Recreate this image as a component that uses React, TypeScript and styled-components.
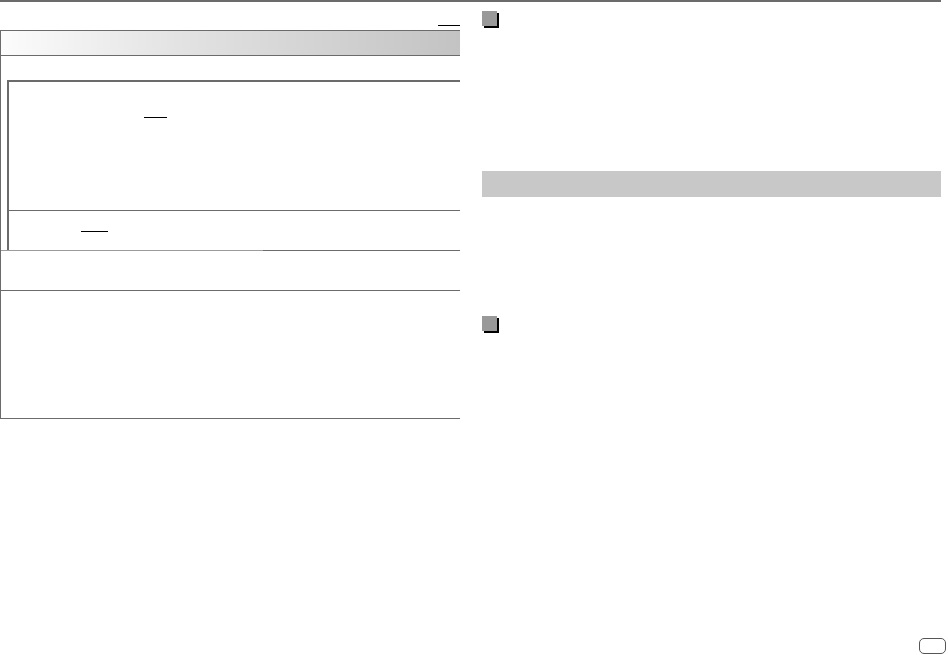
import React from 'react'
import styled, { createGlobalStyle } from 'styled-components'

const GlobalStyle = createGlobalStyle`
  html, body {
    margin: 0;
    padding: 0;
    background: #ffffff;
    font-family: 'Liberation Sans', Arial, sans-serif;
  }
`

const Page = styled.div`
  width: 948px;
  height: 655px;
  display: flex;
  flex-direction: column;
  background: #ffffff;
  overflow: hidden;
`

const TopRule = styled.div`
  width: 941px;
  height: 2px;
  background: #6b6b6b;
`

const Columns = styled.div`
  display: grid;
  grid-template-columns: 460px 459px;
  column-gap: 22px;
  align-items: start;
`

const LeftColumn = styled.div`
  display: flex;
  flex-direction: column;
`

const PageRefRow = styled.div`
  height: 28px;
  display: flex;
  justify-content: flex-end;
  align-items: flex-end;
`

const Underline = styled.span<{ width: number; top?: number; left?: number; bottom?: number }>`
  display: block;
  width: ${({ width }) => width}px;
  height: 1px;
  background: #000000;
  margin-top: ${({ top }) => top ?? 0}px;
  margin-left: ${({ left }) => left ?? 0}px;
  margin-bottom: ${({ bottom }) => bottom ?? 0}px;
`

const Table = styled.div`
  display: flex;
  flex-direction: column;
  border-left: 1px solid #6b6b6b;
  border-bottom: 1px solid #6b6b6b;
`

const HeaderBar = styled.div`
  height: 24px;
  border-top: 1px solid #6b6b6b;
  border-bottom: 1px solid #6b6b6b;
  background: linear-gradient(to right, #fcfcfc 0%, #e2e2e2 40%, #c3c3c3 100%);
`

const Row = styled.div<{ height: number; padTop?: number }>`
  min-height: ${({ height }) => height}px;
  padding-top: ${({ padTop }) => padTop ?? 0}px;
  box-sizing: border-box;
  display: flex;
  flex-direction: column;
`

const Divider = styled.div<{ split?: boolean }>`
  height: 1px;
  background: ${({ split }) =>
    split ? 'linear-gradient(to right, #9c9c9c 262px, #6b6b6b 262px)' : '#6b6b6b'};
`

const InnerBox = styled.div`
  margin-left: 6px;
  border-top: 2px solid #6b6b6b;
  border-left: 2px solid #6b6b6b;
  display: flex;
  flex-direction: column;
`

const SubRow = styled.div<{ height: number; ruled?: boolean }>`
  height: ${({ height }) => height}px;
  border-bottom: ${({ ruled }) => (ruled ? '1px solid #6b6b6b' : 'none')};
  display: flex;
  flex-direction: column;
  align-items: flex-start;
`

const RightColumn = styled.div`
  display: flex;
  flex-direction: column;
  align-items: flex-start;
`

const SectionMark = styled.div<{ top: number }>`
  width: 15px;
  height: 15px;
  margin-top: ${({ top }) => top}px;
  background: #999999;
  box-shadow: 2px 2px 0 #000000;
`

const GrayBar = styled.div<{ top: number }>`
  align-self: stretch;
  height: 26px;
  margin-top: ${({ top }) => top}px;
  background: #c8c8c8;
`

const Footer = styled.div`
  margin-top: auto;
  display: flex;
  justify-content: flex-end;
  padding: 0 2px 1px 0;
`

const PageBadge = styled.div`
  width: 25px;
  height: 14px;
  border: 1.5px solid #555555;
  border-radius: 5px;
`

export default function App() {
  return (
    <>
      <GlobalStyle />
      <Page>
        <TopRule />
        <Columns>
          <LeftColumn>
            <PageRefRow>
              <Underline width={22} bottom={4} />
            </PageRefRow>
            <Table>
              <HeaderBar />
              <Row height={194} padTop={24}>
                <InnerBox>
                  <SubRow height={128} ruled>
                    <Underline width={23} top={35} left={135} />
                  </SubRow>
                  <SubRow height={39}>
                    <Underline width={27} top={20} left={72} />
                  </SubRow>
                </InnerBox>
              </Row>
              <Divider split />
              <Row height={39} />
              <Divider />
              <Row height={127} />
            </Table>
          </LeftColumn>
          <RightColumn>
            <SectionMark top={9} />
            <GrayBar top={145} />
            <SectionMark top={119} />
          </RightColumn>
        </Columns>
        <Footer>
          <PageBadge />
        </Footer>
      </Page>
    </>
  )
}
